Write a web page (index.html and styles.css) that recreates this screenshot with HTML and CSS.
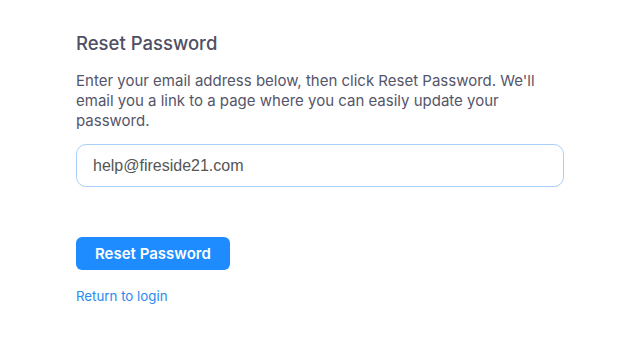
FILE: index.html
```html
<!DOCTYPE html>
<html lang="en">
<head>
    <meta charset="UTF-8">
    <title>Reset Password</title>
    <meta name="viewport" content="width=device-width, initial-scale=1">
    <link rel="stylesheet" href="styles.css">
</head>
<body>
    <div class="container">
        <h2>Reset Password</h2>
        <p class="intro">Enter your email address below, then click Reset Password. We'll email you a link to a page where you can easily update your password.</p>
        <form id="resetForm">
            <div class="form-group">
                <input type="email" id="email" name="email" value="help@fireside21.com">
            </div>
            <button type="submit">Reset Password</button>
        </form>
        <a href="#" class="back-link">Return to login</a>
    </div>
</body>
</html>
```
FILE: styles.css
```css
body { font-family: Inter, Lato, sans-serif; background: #fff; margin: 0; padding: 0; color: #55556a; }
.container { width: 488px; padding: 32px 0 0 76px; }
h2 { font-size: 18.5px; font-weight: 500; margin: 0 0 17px; color: #4f5064; }
.intro { font-size: 15px; line-height: 20px; margin: 0 0 13px; color: #55556a; }
.form-group { margin-bottom: 50px; }
input[type="email"] {
    box-sizing: border-box; width: 100%; height: 43px; padding: 0 16px; border: 1px solid #a9d0fb; border-radius: 10px;
    font-family: "Liberation Sans", Arial, sans-serif; font-size: 16px; color: #555; outline: none;
}
button {
    background: #1e8cff; color: #fff; border: none; height: 33px; padding: 0 19px; border-radius: 6px;
    font-family: Inter, Lato, sans-serif; font-size: 15px; font-weight: 600; cursor: pointer;
}
.back-link { display: inline-block; margin-top: 18px; font-size: 13.3px; color: #2b8af0; text-decoration: none; }
```
